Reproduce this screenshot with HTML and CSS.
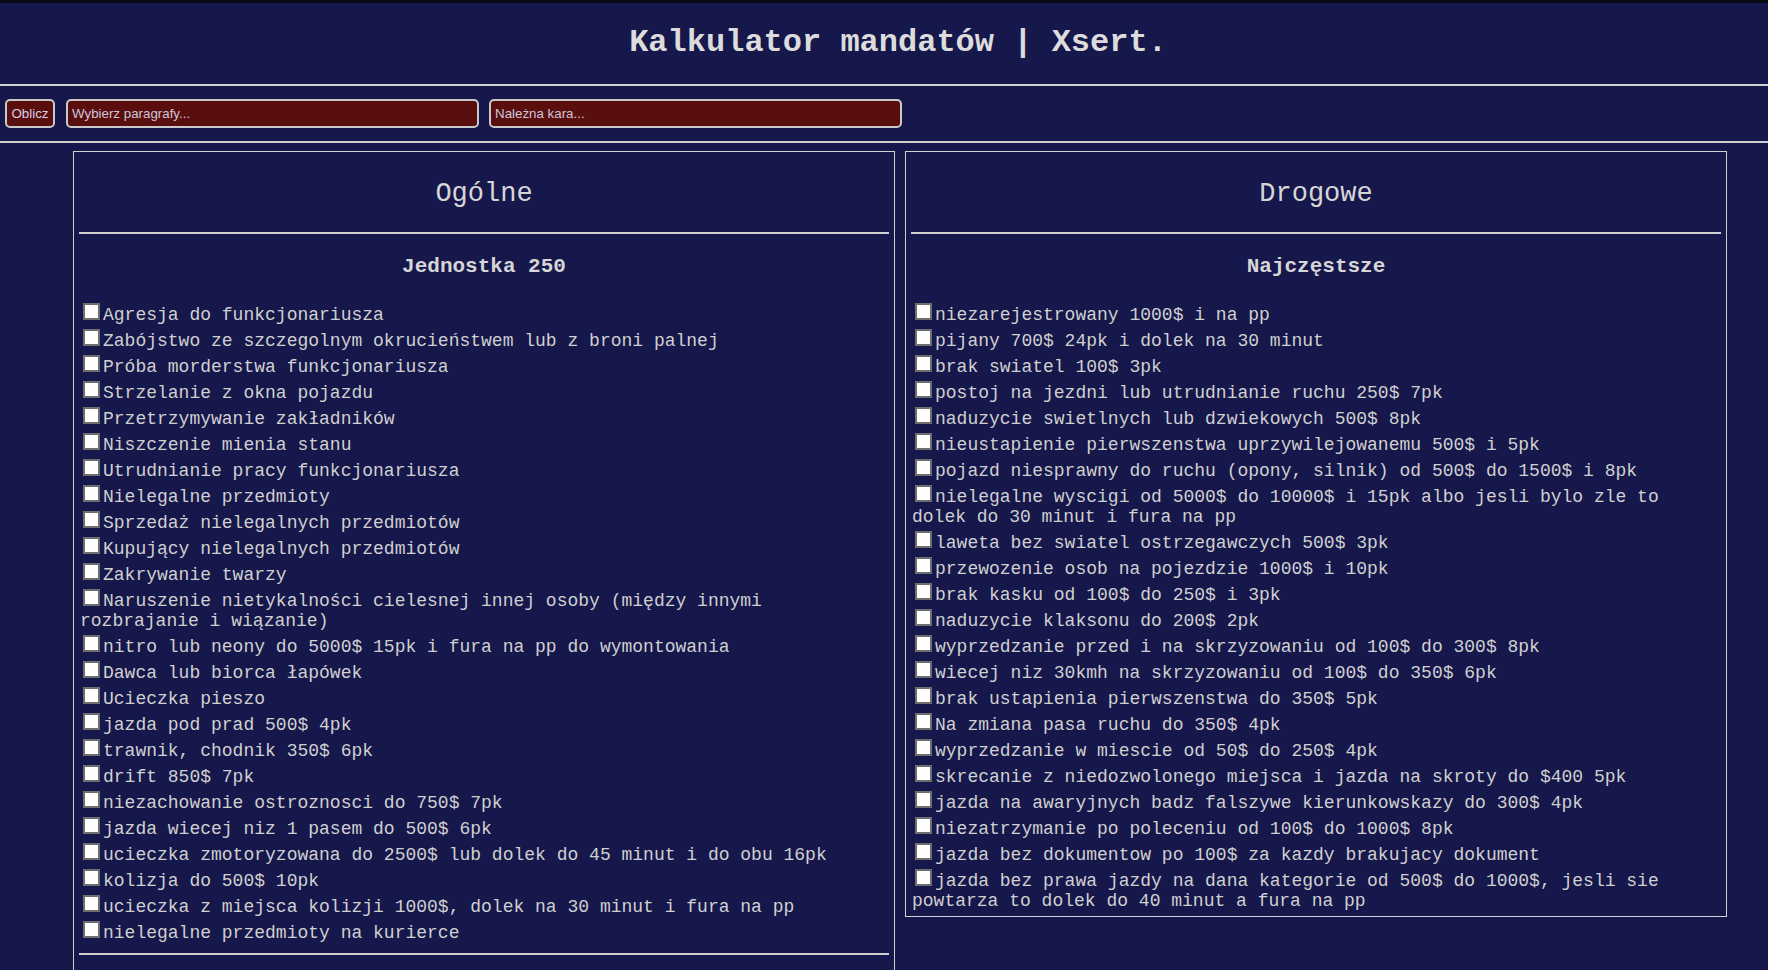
FILE: index.html
```html
<!DOCTYPE html>
<html lang="pl">
<head>
<meta charset="utf-8">
<title>Kalkulator mandatów | Xsert.</title>
<link rel="stylesheet" href="styles.css">
</head>
<body>
<header class="header">
  <h1 class="title">Kalkulator mandatów | Xsert.</h1>
</header>
<hr class="rule">
<div class="controls">
  <button class="btn" type="button">Oblicz</button>
  <input class="field" type="text" placeholder="Wybierz paragrafy...">
  <input class="field" type="text" placeholder="Należna kara...">
</div>
<hr class="rule rule-bottom">
<main class="columns">
  <section class="panel panel-general">
    <h2 class="panel-title">Ogólne</h2>
    <hr class="panel-rule">
    <h3 class="panel-sub">Jednostka 250</h3>
    <div class="list">
      <label class="item"><input type="checkbox">Agresja do funkcjonariusza</label><br>
      <label class="item"><input type="checkbox">Zabójstwo ze szczegolnym okrucieństwem lub z broni palnej</label><br>
      <label class="item"><input type="checkbox">Próba morderstwa funkcjonariusza</label><br>
      <label class="item"><input type="checkbox">Strzelanie z okna pojazdu</label><br>
      <label class="item"><input type="checkbox">Przetrzymywanie zakładników</label><br>
      <label class="item"><input type="checkbox">Niszczenie mienia stanu</label><br>
      <label class="item"><input type="checkbox">Utrudnianie pracy funkcjonariusza</label><br>
      <label class="item"><input type="checkbox">Nielegalne przedmioty</label><br>
      <label class="item"><input type="checkbox">Sprzedaż nielegalnych przedmiotów</label><br>
      <label class="item"><input type="checkbox">Kupujący nielegalnych przedmiotów</label><br>
      <label class="item"><input type="checkbox">Zakrywanie twarzy</label><br>
      <label class="item"><input type="checkbox">Naruszenie nietykalności cielesnej innej osoby (między innymi rozbrajanie i wiązanie)</label><br>
      <label class="item"><input type="checkbox">nitro lub neony do 5000$ 15pk i fura na pp do wymontowania</label><br>
      <label class="item"><input type="checkbox">Dawca lub biorca łapówek</label><br>
      <label class="item"><input type="checkbox">Ucieczka pieszo</label><br>
      <label class="item"><input type="checkbox">jazda pod prad 500$ 4pk</label><br>
      <label class="item"><input type="checkbox">trawnik, chodnik 350$ 6pk</label><br>
      <label class="item"><input type="checkbox">drift 850$ 7pk</label><br>
      <label class="item"><input type="checkbox">niezachowanie ostroznosci do 750$ 7pk</label><br>
      <label class="item"><input type="checkbox">jazda wiecej niz 1 pasem do 500$ 6pk</label><br>
      <label class="item"><input type="checkbox">ucieczka zmotoryzowana do 2500$ lub dolek do 45 minut i do obu 16pk</label><br>
      <label class="item"><input type="checkbox">kolizja do 500$ 10pk</label><br>
      <label class="item"><input type="checkbox">ucieczka z miejsca kolizji 1000$, dolek na 30 minut i fura na pp</label><br>
      <label class="item"><input type="checkbox">nielegalne przedmioty na kurierce</label>
    </div>
    <hr class="panel-rule panel-rule-end">
  </section>
  <section class="panel panel-road">
    <h2 class="panel-title">Drogowe</h2>
    <hr class="panel-rule">
    <h3 class="panel-sub">Najczęstsze</h3>
    <div class="list">
      <label class="item"><input type="checkbox">niezarejestrowany 1000$ i na pp</label><br>
      <label class="item"><input type="checkbox">pijany 700$ 24pk i dolek na 30 minut</label><br>
      <label class="item"><input type="checkbox">brak swiatel 100$ 3pk</label><br>
      <label class="item"><input type="checkbox">postoj na jezdni lub utrudnianie ruchu 250$ 7pk</label><br>
      <label class="item"><input type="checkbox">naduzycie swietlnych lub dzwiekowych 500$ 8pk</label><br>
      <label class="item"><input type="checkbox">nieustapienie pierwszenstwa uprzywilejowanemu 500$ i 5pk</label><br>
      <label class="item"><input type="checkbox">pojazd niesprawny do ruchu (opony, silnik) od 500$ do 1500$ i 8pk</label><br>
      <label class="item"><input type="checkbox">nielegalne wyscigi od 5000$ do 10000$ i 15pk albo jesli bylo zle to dolek do 30 minut i fura na pp</label><br>
      <label class="item"><input type="checkbox">laweta bez swiatel ostrzegawczych 500$ 3pk</label><br>
      <label class="item"><input type="checkbox">przewozenie osob na pojezdzie 1000$ i 10pk</label><br>
      <label class="item"><input type="checkbox">brak kasku od 100$ do 250$ i 3pk</label><br>
      <label class="item"><input type="checkbox">naduzycie klaksonu do 200$ 2pk</label><br>
      <label class="item"><input type="checkbox">wyprzedzanie przed i na skrzyzowaniu od 100$ do 300$ 8pk</label><br>
      <label class="item"><input type="checkbox">wiecej niz 30kmh na skrzyzowaniu od 100$ do 350$ 6pk</label><br>
      <label class="item"><input type="checkbox">brak ustapienia pierwszenstwa do 350$ 5pk</label><br>
      <label class="item"><input type="checkbox">Na zmiana pasa ruchu do 350$ 4pk</label><br>
      <label class="item"><input type="checkbox">wyprzedzanie w miescie od 50$ do 250$ 4pk</label><br>
      <label class="item"><input type="checkbox">skrecanie z niedozwolonego miejsca i jazda na skroty do $400 5pk</label><br>
      <label class="item"><input type="checkbox">jazda na awaryjnych badz falszywe kierunkowskazy do 300$ 4pk</label><br>
      <label class="item"><input type="checkbox">niezatrzymanie po poleceniu od 100$ do 1000$ 8pk</label><br>
      <label class="item"><input type="checkbox">jazda bez dokumentow po 100$ za kazdy brakujacy dokument</label><br>
      <label class="item"><input type="checkbox">jazda bez prawa jazdy na dana kategorie od 500$ do 1000$, jesli sie powtarza to dolek do 40 minut a fura na pp</label>
    </div>
  </section>
</main>
</body>
</html>
```
FILE: styles.css
```css
html, body {
  margin: 0;
  padding: 0;
  background: #16174b;
}

body {
  border-top: 3px solid #0b0b15;
  font-family: "Courier New", "Nimbus Mono PS", "Nimbus Mono L", "FreeMono", "Liberation Mono", monospace;
  color: #d0d0d0;
  overflow: hidden;
}

.header {
  padding-left: 28px;
}

.title {
  margin: 21px 0 23px;
  text-align: center;
  font-size: 32px;
  font-weight: bold;
  line-height: normal;
  color: #dcdcdc;
}

.rule {
  border: 0;
  height: 2px;
  margin: 0;
  background: #cfcfcf;
}

.rule-bottom {
  margin-bottom: 8px;
}

.controls {
  display: flex;
  align-items: center;
  gap: 10px;
  padding: 13px 5px;
}

.btn,
.field {
  box-sizing: border-box;
  height: 29px;
  border: 2px solid #c9c9c9;
  border-radius: 5px;
  background: #5a0e0e;
  color: #d6d0e6;
  font-family: "Liberation Sans", Arial, sans-serif;
  font-size: 13.33px;
  outline: none;
}

.btn {
  width: 50px;
  padding: 0;
  margin-right: 1px;
}

.field {
  width: 413px;
  padding: 0 4px;
}

.field::placeholder {
  color: #cdc7dc;
  opacity: 1;
}

.columns {
  display: flex;
  align-items: flex-start;
  gap: 10px;
  padding-left: 73px;
}

.panel {
  flex: none;
  width: 822px;
  box-sizing: border-box;
  border: 1px solid #cfcfcf;
  padding: 5px 6px;
}

.panel-general {
  padding-bottom: 80px;
}

.panel-title {
  margin: 22.4px 0;
  font-size: 27px;
  font-weight: normal;
  line-height: normal;
  text-align: center;
  color: #d6d6d6;
}

.panel-rule {
  border: 0;
  height: 2px;
  margin: 0 -1px;
  background: #d0d0d0;
}

.panel-rule-end {
  margin-top: 10px;
}

.panel-sub {
  margin: 21px 0;
  font-size: 21px;
  font-weight: bold;
  line-height: normal;
  text-align: center;
  color: #d6d6d6;
}

.list {
  font-size: 18px;
  line-height: normal;
}

.item input {
  -webkit-appearance: none;
  appearance: none;
  box-sizing: border-box;
  width: 17px;
  height: 17px;
  margin: 4px 3px 0 3px;
  border: 2px solid #6e6e6e;
  background: #ffffff;
  vertical-align: baseline;
}
```
